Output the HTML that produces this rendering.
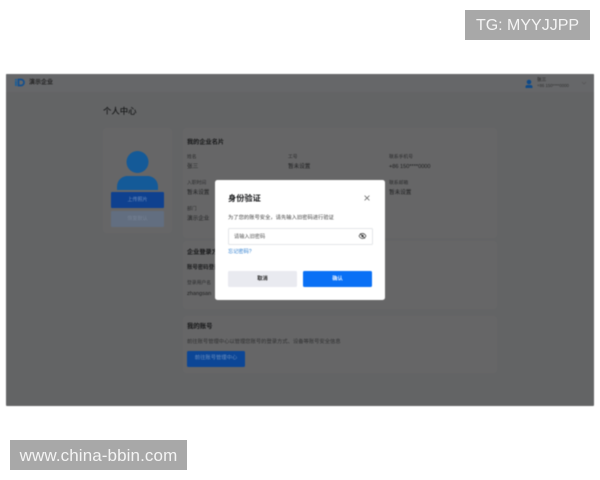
<!DOCTYPE html>
<html lang="zh"><head><meta charset="utf-8"><style>
html,body{margin:0;padding:0;background:#fff}
body{width:600px;height:480px;overflow:hidden;position:relative;font-family:"Liberation Sans","Noto Sans CJK SC",sans-serif}
.a{position:absolute;white-space:nowrap}
.t{position:absolute;white-space:nowrap;line-height:1;color:#1f2021}
#app{position:absolute;left:6px;top:74px;width:588px;height:332px;background:#636465;border-radius:1px;overflow:hidden;filter:blur(.55px)}
.x{position:absolute;left:-6px;top:-74px;width:600px;height:480px}
.card{position:absolute;background:#666667;border-radius:3px}
.l{font-size:4.8px;color:#2c2d2e}
.v{font-size:5.6px;color:#1d1e1f}
.h{font-size:6.2px;font-weight:700;color:#161718}
.wm{position:absolute;background:#a8a8a8;line-height:1;white-space:nowrap}
#dlg{position:absolute;left:215px;top:180px;width:170px;height:120px;background:#fff;border-radius:2.5px;filter:blur(.4px)}
</style></head><body>
<div class="wm" style="left:465px;top:10px;width:125px;height:30px;font-size:16px;line-height:31px;text-align:center;color:#f4f4f4">TG: MYYJJPP</div>
<div id="app"><div class="x">
 <div class="a" style="left:0;top:74px;width:600px;height:18px;background:#666769"></div>
 <svg class="a" style="left:14px;top:78px" width="11" height="9" viewBox="0 0 11 9"><rect x="1" y="1" width="2" height="1.500" fill="#1f5f96"/><rect x="1" y="3" width="2" height="5" fill="#1f5f96"/><path d="M4.500 1.500h2.500a3 3 0 0 1 0 6H4.500z" fill="none" stroke="#124f8e" stroke-width="1.700"/></svg>
 <div class="t" style="left:29px;top:80px;font-size:6px;font-weight:700;color:#222">演示企业</div>
 <svg class="a" style="left:524px;top:79px" width="10" height="10" viewBox="0 0 10 10"><circle cx="5" cy="3" r="2.300" fill="#0f4a88"/><path d="M1.500 9V7.600a2 2 0 0 1 2-1.600h3a2 2 0 0 1 2 1.600V9z" fill="#0f4a88"/></svg>
 <div class="t" style="left:537px;top:78px;font-size:4.600px;color:#222">张三</div>
 <div class="t" style="left:537px;top:84px;font-size:4.300px;color:#333">+86 150****0000</div>
 <svg class="a" style="left:581px;top:80px" width="6" height="6" viewBox="0 0 6 6"><path d="M1 2l2 2 2-2" fill="none" stroke="#555" stroke-width=".7"/></svg>

 <div class="t" style="left:103px;top:107px;font-size:8.400px;color:#161718;font-weight:500">个人中心</div>

 <div class="card" style="left:103px;top:128px;width:69px;height:105px"></div>
 <svg class="a" style="left:111px;top:148px" width="53" height="44" viewBox="0 0 53 44"><circle cx="26.500" cy="14" r="11" fill="#145a98"/><path d="M6 42v-3c0-7 5-11 11-11h19c6 0 11 4 11 11v3z" fill="#145a98"/></svg>
 <div class="a" style="left:111px;top:192px;width:53px;height:16px;background:#0f418f;border-radius:1px"></div>
 <div class="t" style="left:111px;top:198px;width:53px;text-align:center;font-size:5px;color:#6f8fbe">上传照片</div>
 <div class="a" style="left:111px;top:211px;width:53px;height:16px;background:#626e80;border-radius:1px"></div>
 <div class="t" style="left:111px;top:217px;width:53px;text-align:center;font-size:5px;color:#768294">恢复默认</div>

 <div class="card" style="left:183px;top:128px;width:314px;height:110px"></div>
 <div class="t h" style="left:187px;top:140px">我的企业名片</div>
 <div class="t l" style="left:187px;top:156px">姓名</div><div class="t v" style="left:187px;top:165px">张三</div>
 <div class="t l" style="left:288px;top:156px">工号</div><div class="t v" style="left:288px;top:165px">暂未设置</div>
 <div class="t l" style="left:389px;top:156px">联系手机号</div><div class="t v" style="left:389px;top:165px">+86 150****0000</div>
 <div class="t l" style="left:187px;top:182px">入职时间</div><div class="t v" style="left:187px;top:191px">暂未设置</div>
 <div class="t l" style="left:389px;top:182px">联系邮箱</div><div class="t v" style="left:389px;top:191px">暂未设置</div>
 <div class="t l" style="left:187px;top:208px">部门</div><div class="t v" style="left:187px;top:217px">演示企业</div>

 <div class="card" style="left:183px;top:241px;width:314px;height:68px"></div>
 <div class="t h" style="left:187px;top:250px">企业登录方式</div>
 <div class="t" style="left:187px;top:266px;font-size:5.400px;font-weight:700;color:#1c1d1e">账号密码登录</div>
 <div class="t l" style="left:187px;top:282px">登录用户名</div>
 <div class="t v" style="left:187px;top:292px">zhangsan</div>

 <div class="card" style="left:183px;top:316px;width:314px;height:57px"></div>
 <div class="t h" style="left:187px;top:324px;font-size:6.400px">我的账号</div>
 <div class="t" style="left:187px;top:340px;font-size:5.300px;color:#303132">前往账号管理中心以管理您账号的登录方式、设备等账号安全信息</div>
 <div class="a" style="left:187px;top:351px;width:58px;height:16px;background:#0c4696;border-radius:1.500px"></div>
 <div class="t" style="left:187px;top:356px;width:58px;text-align:center;font-size:5.300px;color:#6a8dbd">前往账号管理中心</div>
</div></div>

<div id="dlg"><div class="x" style="left:-215px;top:-180px">
 <div class="t" style="left:228px;top:195px;font-size:8.200px;font-weight:700;color:#151618">身份验证</div>
 <svg class="a" style="left:363px;top:194px" width="8" height="8" viewBox="0 0 8 8"><path d="M1.600 1.600l4.800 4.800M6.400 1.600l-4.800 4.800" stroke="#555" stroke-width=".7" fill="none"/></svg>
 <div class="t" style="left:228px;top:216px;font-size:5.300px;color:#444">为了您的账号安全，请先输入旧密码进行验证</div>
 <div class="a" style="left:228px;top:228px;width:143px;height:15px;border:.7px solid #e4e5e8;border-radius:1.500px;background:#fff"></div>
 <div class="t" style="left:234px;top:235px;font-size:5.200px;color:#555">请输入旧密码</div>
 <svg class="a" style="left:358px;top:232px" width="9" height="8" viewBox="0 0 9 8"><path d="M1 4c1-1.700 2-2.500 3.500-2.500S7 2.300 8 4C7 5.700 6 6.500 4.500 6.500S2 5.700 1 4z" fill="none" stroke="#333" stroke-width=".7"/><circle cx="4.500" cy="4" r="1.200" fill="#333"/><path d="M2 1.500l5 5" stroke="#333" stroke-width=".6"/></svg>
 <div class="t" style="left:228px;top:250px;font-size:5.200px;color:#2f7fd0">忘记密码?</div>
 <div class="a" style="left:228px;top:271px;width:69px;height:16px;background:#e9eaf0;border-radius:1.500px"></div>
 <div class="t" style="left:228px;top:277px;width:69px;text-align:center;font-size:5.200px;font-weight:700;color:#222">取消</div>
 <div class="a" style="left:303px;top:271px;width:69px;height:16px;background:#0a70f5;border-radius:1.500px"></div>
 <div class="t" style="left:303px;top:277px;width:69px;text-align:center;font-size:5.200px;font-weight:700;color:#eaf3ff">确认</div>
</div></div>

<div class="wm" style="left:10px;top:440px;width:177px;height:30px;font-size:17px;line-height:31px;text-align:center;color:#f4f4f4;letter-spacing:.1px">www.china-bbin.com</div>
</body></html>
